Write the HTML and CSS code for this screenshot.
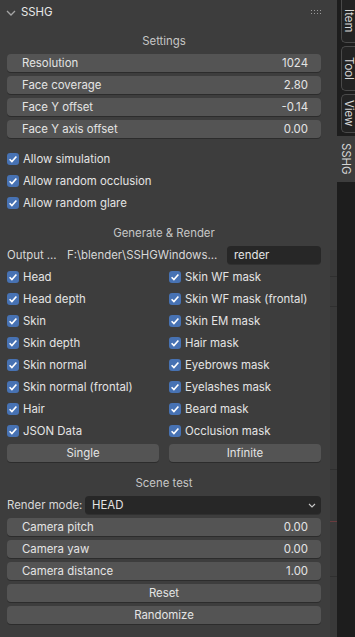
FILE: index.html
```html
<!DOCTYPE html>
<html>
<head>
<meta charset="utf-8">
<link rel="stylesheet" href="styles.css">
</head>
<body>
<div class="app">
  <div class="panel">
    <div class="header">
      <svg class="chev" width="10" height="6" viewBox="0 0 10 6"><path d="M1 1 L5 5 L9 1" fill="none" stroke="#a5a5a5" stroke-width="1.3"/></svg>
      <span class="title">SSHG</span>
      <svg class="grip" width="11" height="5" viewBox="0 0 11 5">
        <g fill="#9a9a9a">
          <rect x="0" y="0" width="1" height="1"/><rect x="3" y="0" width="1" height="1"/><rect x="6" y="0" width="1" height="1"/><rect x="9" y="0" width="1" height="1"/>
          <rect x="0" y="3" width="1" height="1"/><rect x="3" y="3" width="1" height="1"/><rect x="6" y="3" width="1" height="1"/><rect x="9" y="3" width="1" height="1"/>
        </g>
      </svg>
    </div>
    <div class="content">
      <div class="heading">Settings</div>
      <div class="field"><span>Resolution</span><span>1024</span></div>
      <div class="field"><span>Face coverage</span><span>2.80</span></div>
      <div class="field"><span>Face Y offset</span><span>-0.14</span></div>
      <div class="field"><span>Face Y axis offset</span><span>0.00</span></div>

      <div class="check section"><span class="box"><svg width="12" height="12" viewBox="0 0 12 12"><path d="M2.6 6.3 L4.9 8.6 L9.4 3.4" fill="none" stroke="#fff" stroke-width="1.6"/></svg></span>Allow simulation</div>
      <div class="check"><span class="box"><svg width="12" height="12" viewBox="0 0 12 12"><path d="M2.6 6.3 L4.9 8.6 L9.4 3.4" fill="none" stroke="#fff" stroke-width="1.6"/></svg></span>Allow random occlusion</div>
      <div class="check"><span class="box"><svg width="12" height="12" viewBox="0 0 12 12"><path d="M2.6 6.3 L4.9 8.6 L9.4 3.4" fill="none" stroke="#fff" stroke-width="1.6"/></svg></span>Allow random glare</div>

      <div class="heading section">Generate &amp; Render</div>
      <div class="output">
        <span class="out-label">Output ...</span>
        <span class="out-path">F:\blender\SSHGWindows...</span>
        <span class="dark-field out-field">render</span>
      </div>
      <div class="grid">
        <div class="check"><span class="box"><svg width="12" height="12" viewBox="0 0 12 12"><path d="M2.6 6.3 L4.9 8.6 L9.4 3.4" fill="none" stroke="#fff" stroke-width="1.6"/></svg></span>Head</div>
        <div class="check"><span class="box"><svg width="12" height="12" viewBox="0 0 12 12"><path d="M2.6 6.3 L4.9 8.6 L9.4 3.4" fill="none" stroke="#fff" stroke-width="1.6"/></svg></span>Skin WF mask</div>
        <div class="check"><span class="box"><svg width="12" height="12" viewBox="0 0 12 12"><path d="M2.6 6.3 L4.9 8.6 L9.4 3.4" fill="none" stroke="#fff" stroke-width="1.6"/></svg></span>Head depth</div>
        <div class="check"><span class="box"><svg width="12" height="12" viewBox="0 0 12 12"><path d="M2.6 6.3 L4.9 8.6 L9.4 3.4" fill="none" stroke="#fff" stroke-width="1.6"/></svg></span>Skin WF mask (frontal)</div>
        <div class="check"><span class="box"><svg width="12" height="12" viewBox="0 0 12 12"><path d="M2.6 6.3 L4.9 8.6 L9.4 3.4" fill="none" stroke="#fff" stroke-width="1.6"/></svg></span>Skin</div>
        <div class="check"><span class="box"><svg width="12" height="12" viewBox="0 0 12 12"><path d="M2.6 6.3 L4.9 8.6 L9.4 3.4" fill="none" stroke="#fff" stroke-width="1.6"/></svg></span>Skin EM mask</div>
        <div class="check"><span class="box"><svg width="12" height="12" viewBox="0 0 12 12"><path d="M2.6 6.3 L4.9 8.6 L9.4 3.4" fill="none" stroke="#fff" stroke-width="1.6"/></svg></span>Skin depth</div>
        <div class="check"><span class="box"><svg width="12" height="12" viewBox="0 0 12 12"><path d="M2.6 6.3 L4.9 8.6 L9.4 3.4" fill="none" stroke="#fff" stroke-width="1.6"/></svg></span>Hair mask</div>
        <div class="check"><span class="box"><svg width="12" height="12" viewBox="0 0 12 12"><path d="M2.6 6.3 L4.9 8.6 L9.4 3.4" fill="none" stroke="#fff" stroke-width="1.6"/></svg></span>Skin normal</div>
        <div class="check"><span class="box"><svg width="12" height="12" viewBox="0 0 12 12"><path d="M2.6 6.3 L4.9 8.6 L9.4 3.4" fill="none" stroke="#fff" stroke-width="1.6"/></svg></span>Eyebrows mask</div>
        <div class="check"><span class="box"><svg width="12" height="12" viewBox="0 0 12 12"><path d="M2.6 6.3 L4.9 8.6 L9.4 3.4" fill="none" stroke="#fff" stroke-width="1.6"/></svg></span>Skin normal (frontal)</div>
        <div class="check"><span class="box"><svg width="12" height="12" viewBox="0 0 12 12"><path d="M2.6 6.3 L4.9 8.6 L9.4 3.4" fill="none" stroke="#fff" stroke-width="1.6"/></svg></span>Eyelashes mask</div>
        <div class="check"><span class="box"><svg width="12" height="12" viewBox="0 0 12 12"><path d="M2.6 6.3 L4.9 8.6 L9.4 3.4" fill="none" stroke="#fff" stroke-width="1.6"/></svg></span>Hair</div>
        <div class="check"><span class="box"><svg width="12" height="12" viewBox="0 0 12 12"><path d="M2.6 6.3 L4.9 8.6 L9.4 3.4" fill="none" stroke="#fff" stroke-width="1.6"/></svg></span>Beard mask</div>
        <div class="check"><span class="box"><svg width="12" height="12" viewBox="0 0 12 12"><path d="M2.6 6.3 L4.9 8.6 L9.4 3.4" fill="none" stroke="#fff" stroke-width="1.6"/></svg></span>JSON Data</div>
        <div class="check"><span class="box"><svg width="12" height="12" viewBox="0 0 12 12"><path d="M2.6 6.3 L4.9 8.6 L9.4 3.4" fill="none" stroke="#fff" stroke-width="1.6"/></svg></span>Occlusion mask</div>
        <div class="button">Single</div>
        <div class="button">Infinite</div>
      </div>

      <div class="heading section">Scene test</div>
      <div class="mode">
        <span class="mode-label">Render mode:</span>
        <span class="dark-field dropdown"><span>HEAD</span><svg width="8" height="5" viewBox="0 0 8 5"><path d="M1 1 L4 4 L7 1" fill="none" stroke="#c8c8c8" stroke-width="1.1"/></svg></span>
      </div>
      <div class="field"><span>Camera pitch</span><span>0.00</span></div>
      <div class="field"><span>Camera yaw</span><span>0.00</span></div>
      <div class="field"><span>Camera distance</span><span>1.00</span></div>
      <div class="button">Reset</div>
      <div class="button">Randomize</div>
    </div>
  </div>
  <div class="gutter"></div>
  <div class="tabs">
    <div class="tab tab-item">Item</div>
    <div class="tab tab-tool">Tool</div>
    <div class="tab tab-view">View</div>
    <div class="tab tab-active">SSHG</div>
  </div>
</div>
</body>
</html>
```

FILE: styles.css
```css
* { box-sizing: border-box; }
html, body {
  margin: 0;
  padding: 0;
}
body {
  background: #1d1d1d;
  font-family: Inter, "Noto Sans", sans-serif;
  font-size: 11.4px;
  color: #e4e4e4;
  width: 355px;
  height: 637px;
  overflow: hidden;
}
.app {
  display: flex;
  width: 355px;
  height: 637px;
}
.panel {
  width: 330px;
  background: #3d3d3d;
  display: flex;
  flex-direction: column;
}
.gutter {
  width: 7px;
  background:
    linear-gradient(to bottom,
      #3d3d3d 0, #3d3d3d 250px,
      #393939 250px, #393939 276px,
      #2f2f2f 276px, #2f2f2f 277px,
      #393939 277px, #393939 306px,
      #2f2f2f 306px, #2f2f2f 307px,
      #393939 307px, #393939 469px,
      #2f2f2f 469px, #2f2f2f 470px,
      #393939 470px, #393939 521px,
      #6a3b3e 521px, #6a3b3e 522px,
      #393939 522px, #393939 576px,
      #2f2f2f 576px, #2f2f2f 577px,
      #393939 577px, #393939 100%);
}
.header {
  height: 24px;
  display: flex;
  align-items: center;
  padding-left: 6px;
  padding-right: 8px;
}
.chev { margin-right: 5px; margin-top: 1px; }
.title { flex: 1; color: #e8e8e8; }
.content {
  display: flex;
  flex-direction: column;
  gap: 4px;
  padding: 8px 9px 0 7px;
}
.section { margin-top: 8px; }
.heading {
  height: 18px;
  line-height: 18px;
  text-align: center;
  color: #c6c6c6;
}
.field {
  height: 18px;
  border-radius: 4px;
  background: #545454;
  box-shadow: 0 1px 0 rgba(0,0,0,0.28);
  display: flex;
  justify-content: space-between;
  align-items: center;
  padding: 0 13px 0 15px;
}
.button {
  height: 18px;
  border-radius: 4px;
  background: #545454;
  box-shadow: 0 1px 0 rgba(0,0,0,0.28);
  display: flex;
  justify-content: center;
  align-items: center;
}
.check {
  height: 18px;
  display: flex;
  align-items: center;
  white-space: nowrap;
}
.box {
  width: 12px;
  height: 12px;
  border-radius: 3px;
  background: #4772b3;
  margin-right: 4px;
  display: flex;
}
.output, .mode {
  height: 18px;
  display: flex;
  align-items: center;
}
.out-label { width: 60px; color: #d8d8d8; }
.out-path { flex: 1; color: #d8d8d8; }
.dark-field {
  height: 18px;
  border-radius: 4px;
  background: #272727;
  box-shadow: 0 1px 0 rgba(0,0,0,0.2);
  display: flex;
  align-items: center;
  padding: 0 7px;
}
.out-field { width: 94px; }
.mode-label { width: 78px; color: #d8d8d8; }
.dropdown { flex: 1; justify-content: space-between; padding-right: 5px; }
.grid {
  display: grid;
  grid-template-columns: 1fr 1fr;
  column-gap: 10px;
  row-gap: 4px;
}
.tabs {
  width: 18px;
  background: #1d1d1d;
  display: flex;
  flex-direction: column;
  gap: 3px;
}
.tab {
  writing-mode: vertical-rl;
  display: flex;
  align-items: center;
  justify-content: center;
  color: #d6d6d6;
  font-size: 11.4px;
  background: #232323;
  border: 1px solid #4a4a4a;
  border-right: none;
  border-radius: 5px 0 0 5px;
  margin-left: 4px;
}
.tab-item { height: 43px; border-top: none; border-radius: 0 0 0 5px; }
.tab-tool { height: 45px; }
.tab-view { height: 39px; }
.tab-active {
  height: 46px;
  background: #3d3d3d;
  border: none;
  margin-left: 0;
  border-radius: 0 0 0 0;
}
```
